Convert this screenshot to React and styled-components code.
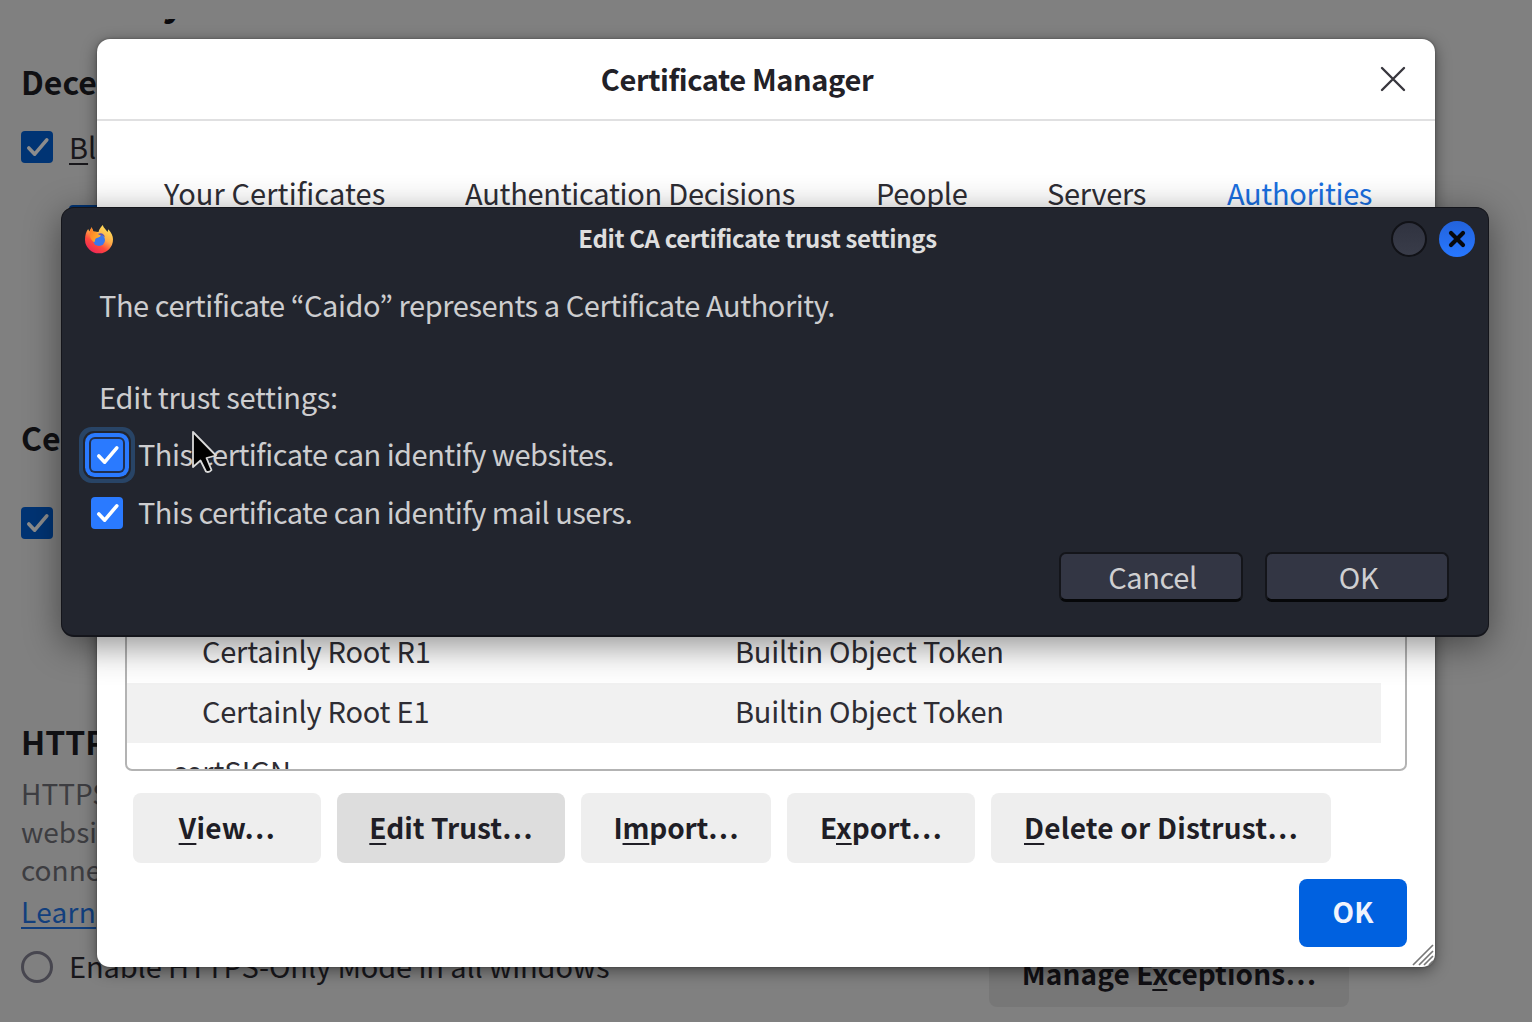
import React from "react";
import styled, { createGlobalStyle } from "styled-components";

const Global = createGlobalStyle`
  * { box-sizing: border-box; }
  html, body { margin: 0; padding: 0; }
  body {
    width: 1532px;
    height: 1022px;
    overflow: hidden;
    background: #808080;
    font-family: "Noto Sans CJK KR", "Noto Sans", sans-serif;
    font-size: 29px;
  }
`;

const Screen = styled.div`
  position: relative;
  width: 1532px;
  height: 1022px;
  overflow: hidden;
`;

const Page = styled.main`
  display: flex;
  flex-direction: column;
  height: 1003px;
  margin-top: 19px;
  padding-left: 21px;
  overflow: hidden;
  color: #0b0a0d;
`;

const PageTitle = styled.h1`
  flex: none;
  margin: -52px 0 0;
  height: 60px;
  font-size: 40px;
  line-height: 60px;
  font-weight: 700;
`;

const PageLine = styled.div`
  display: flex;
  flex: none;
  align-items: center;
  height: 40px;
  margin-top: ${(p) => p.$gap || 0}px;
  padding-left: ${(p) => p.$indent || 0}px;
  gap: 16px;
  white-space: nowrap;
  line-height: 40px;
  font-weight: ${(p) => (p.$bold ? 700 : 400)};
  font-size: ${(p) => p.$size || (p.$bold ? 32 : 29)}px;
  color: ${(p) => p.$color || (p.$bold ? "#101013" : "#18171b")};
`;

const Label = styled.span`
  margin-top: ${(p) => (p.$lift ? -2 * p.$lift : -4)}px;
  letter-spacing: ${(p) => p.$track || 0}px;
`;

const Link = styled.span`
  text-decoration: underline;
  text-decoration-thickness: 2px;
  text-underline-offset: 4px;
  letter-spacing: 0.3px;
`;

const Key = styled.span`
  text-decoration: underline;
  text-decoration-thickness: 2px;
  text-underline-offset: 4px;
  text-decoration-skip-ink: none;
`;

const Box = styled.span`
  display: flex;
  flex: none;
  width: 32px;
  height: 32px;
  border-radius: 4px;
  background: ${(p) => (p.$dim ? "#003474" : "#2a7aff")};
  color: ${(p) => (p.$dim ? "#8c8c8c" : "#ffffff")};
  box-shadow: ${(p) =>
    p.$focus
      ? "0 0 0 2px #21304f, 0 0 0 6px #2a7aff, 0 0 0 8px #22252e, 0 0 0 12px #284466"
      : "none"};
`;

const Radio = styled.span`
  width: 32px;
  height: 32px;
  border: 3px solid #47464f;
  border-radius: 50%;
`;

const PageFooter = styled.div`
  display: flex;
  flex: none;
  justify-content: flex-end;
  padding-right: 183px;
  margin-top: -50px;
`;

const Manage = styled.div`
  width: 360px;
  height: 70px;
  border-radius: 8px;
  background: #777777;
  color: #111014;
  font-size: 28px;
  font-weight: 700;
  line-height: 72px;
  text-align: center;
  letter-spacing: 0.1px;
`;

const Manager = styled.section`
  position: absolute;
  left: 97px;
  top: 39px;
  width: 1338px;
  height: 928px;
  border-radius: 13px;
  background: #ffffff;
  color: #2e2d34;
  box-shadow: 0 4px 16px rgba(0, 0, 0, 0.45), 0 0 3px rgba(0, 0, 0, 0.35);
  display: flex;
  flex-direction: column;
`;

const ManagerHeader = styled.header`
  display: flex;
  flex: none;
  align-items: center;
  height: 82px;
  padding-right: 29px;
  border-bottom: 2px solid #e0e0e1;
`;

const ManagerTitle = styled.h2`
  flex: 1;
  margin: -2px 0 0;
  padding-right: 3px;
  font-size: 29px;
  line-height: 40px;
  font-weight: 700;
  letter-spacing: -0.38px;
  text-align: center;
  color: #222127;
`;

const Tabs = styled.nav`
  display: flex;
  flex: none;
  gap: 80px;
  height: 60px;
  margin-top: 41px;
  padding-left: 67px;
  line-height: 60px;
  white-space: nowrap;
`;

const Tab = styled.span`
  flex: none;
  width: ${(p) => p.$w}px;
  letter-spacing: ${(p) => p.$track}px;
  color: ${(p) => (p.$active ? "#1a6fe0" : "#2e2d34")};
`;

const Tree = styled.div`
  flex: none;
  width: 1282px;
  height: 551px;
  margin: -2px 0 0 28px;
  padding-top: 401px;
  border: 2px solid #b3b3b3;
  border-radius: 7px;
  overflow: hidden;
`;

const Row = styled.div`
  display: grid;
  grid-template-columns: 533px 1fr;
  width: 1254px;
  height: 60px;
  padding-left: ${(p) => (p.$group ? 45 : 75)}px;
  line-height: 54px;
  white-space: nowrap;
  letter-spacing: ${(p) => (p.$group ? 0 : -0.23)}px;
  background: ${(p) => (p.$striped ? "#f1f1f1" : "transparent")};
`;

const Actions = styled.div`
  display: flex;
  flex: none;
  gap: 16px;
  margin: 22px 0 0 36px;
`;

const Action = styled.button`
  width: ${(p) => p.$w}px;
  height: 70px;
  padding: 0 0 2px;
  border: 0;
  border-radius: 8px;
  background: ${(p) => (p.$pressed ? "#dddddd" : "#eeeeee")};
  color: #1f1e26;
  font: 700 28px/68px "Noto Sans CJK KR", "Noto Sans", sans-serif;
  letter-spacing: ${(p) => p.$track || 0}px;
  white-space: nowrap;
`;

const Accept = styled.button`
  align-self: flex-end;
  flex: none;
  width: 108px;
  height: 68px;
  margin: 16px 28px 0 0;
  padding: 0 0 4px;
  border: 0;
  border-radius: 8px;
  background: #0061e0;
  color: #f0f4fd;
  font: 700 28px/64px "Noto Sans CJK KR", "Noto Sans", sans-serif;
`;

const Grip = styled.svg`
  position: absolute;
  right: 1px;
  bottom: 1px;
`;

const Trust = styled.section`
  position: absolute;
  left: 61px;
  top: 207px;
  display: flex;
  flex-direction: column;
  width: 1428px;
  height: 430px;
  border: 1px solid #14151b;
  border-bottom-width: 2px;
  border-radius: 13px;
  background: #22252e;
  color: #cdcdcf;
  box-shadow: 0 8px 36px rgba(0, 0, 0, 0.46);
`;

const TrustHeader = styled.header`
  display: grid;
  grid-template-columns: 41px 1fr 84px;
  align-items: center;
  flex: none;
  height: 62px;
  padding: 0 13px 0 21px;
`;

const TrustTitle = styled.h2`
  margin: -2px 0 0;
  font-size: 24px;
  line-height: 40px;
  font-weight: 700;
  letter-spacing: -0.38px;
  text-align: center;
  color: #dedede;
`;

const Controls = styled.div`
  display: flex;
  gap: 12px;
`;

const Round = styled.span`
  display: flex;
  flex: none;
  align-items: center;
  justify-content: center;
  width: 36px;
  height: 36px;
  border-radius: 50%;
  border: ${(p) => (p.$close ? "0" : "2px solid #111217")};
  background: ${(p) =>
    p.$close ? "linear-gradient(#2363dc, #2777ff)" : "linear-gradient(#303340, #393c49)"};
`;

const TrustBody = styled.div`
  display: flex;
  flex-direction: column;
  padding: 14px 39px 0 29px;
`;

const Copy = styled.p`
  margin: 0 0 ${(p) => p.$after || 0}px 8px;
  line-height: 40px;
  white-space: nowrap;
  letter-spacing: ${(p) => p.$track}px;
`;

const Option = styled.label`
  display: flex;
  align-items: center;
  gap: 15px;
  height: 40px;
  margin-bottom: 18px;
  line-height: 40px;
  white-space: nowrap;
`;

const DialogButtons = styled.div`
  display: flex;
  justify-content: flex-end;
  gap: 22px;
  margin-top: 1px;
`;

const DialogButton = styled.button`
  width: 184px;
  height: 50px;
  padding: 0 0 1px 3px;
  border: 2px solid #14151a;
  border-bottom: 3px solid #060709;
  border-radius: 7px;
  background: #333644;
  color: #cfcfd1;
  font: 400 29px/43px "Noto Sans CJK KR", "Noto Sans", sans-serif;
  letter-spacing: -0.4px;
`;

const Pointer = styled.svg`
  position: absolute;
  left: 191px;
  top: 430px;
`;

const Tick = () => (
  <svg width="32" height="32" viewBox="0 0 32 32" fill="none" stroke="currentColor" strokeWidth="3.6" strokeLinecap="round" strokeLinejoin="round">
    <path d="M7.8 17 13.7 23.2 25.8 8.8" />
  </svg>
);

const Firefox = () => (
  <svg width="32" height="32" viewBox="0 0 32 32">
    <defs>
      <linearGradient id="flame" x1="0.85" y1="0.1" x2="0.3" y2="1">
        <stop offset="0" stopColor="#ffe05a" />
        <stop offset="0.4" stopColor="#ffad48" />
        <stop offset="0.68" stopColor="#ff4a3c" />
        <stop offset="1" stopColor="#ee2458" />
      </linearGradient>
      <linearGradient id="mane" x1="0" y1="0" x2="1" y2="0.5">
        <stop offset="0" stopColor="#ff7827" />
        <stop offset="1" stopColor="#ffb12b" />
      </linearGradient>
    </defs>
    <path fill="url(#flame)" d="M19.8 2c.5 3 3.2 4.3 4.7 7l.8-2.7c3 3.3 4.7 6.5 4.7 10A14 13.8 0 0 1 2 16.8C2 12 3.2 8.6 5.2 6l1.1 2.6L8.6 4.3 10.5 8.5 15.5 9C16 6 18 4 19.8 2Z" />
    <circle cx="16" cy="17" r="6" fill="#3b78ed" />
    <path fill="#5a55b9" d="M15 10.8c3.5-1.8 6.5.3 7 3.5-2-2-3.8-2.3-5.5-1Z" />
    <path fill="url(#mane)" d="M8.6 4.3 10.5 9c3-.8 4.5.6 5 2.5l2.3.7c-.5 2.4-4.3 2.2-5.3 3.6-1 1.5.2 2.6-1.5 3.5C7 16 5 11 8.6 4.3Z" />
  </svg>
);

const rows = [
  { name: "Certainly Root R1", device: "Builtin Object Token" },
  { name: "Certainly Root E1", device: "Builtin Object Token", striped: true },
  { name: "certSIGN", group: true },
];

export default function App() {
  return (
    <Screen>
      <Global />
      <Page>
        <PageTitle>Security</PageTitle>
        <PageLine $bold $gap={35}><Label $lift={1}>Dece</Label></PageLine>
        <PageLine $gap={25}>
          <Box $dim><Tick /></Box>
          <Label $lift={1}><Key>B</Key>l</Label>
        </PageLine>
        <PageLine $gap={34} $indent={48}><Box $dim /></PageLine>
        <PageLine $bold $gap={178}><Label>Cer</Label></PageLine>
        <PageLine $gap={44}><Box $dim><Tick /></Box></PageLine>
        <PageLine $bold $gap={180}><Label>HTTPS</Label></PageLine>
        <PageLine $gap={11} $size={28} $color="#3d3d41"><Label $lift={1}>HTTPS</Label></PageLine>
        <PageLine $gap={-2} $size={28} $color="#3d3d41"><Label $lift={1}>websit</Label></PageLine>
        <PageLine $gap={-2} $size={28} $color="#3d3d41"><Label $lift={1}>connec</Label></PageLine>
        <PageLine $gap={3} $size={28} $color="#123f7d"><Label><Link>Learn</Link></Label></PageLine>
        <PageLine $gap={14}>
          <Radio />
          <Label $track={-0.12}>Enable HTTPS-Only Mode in all windows</Label>
        </PageLine>
        <PageFooter>
          <Manage>Manage E<Key>x</Key>ceptions…</Manage>
        </PageFooter>
      </Page>

      <Manager>
        <ManagerHeader>
          <ManagerTitle>Certificate Manager</ManagerTitle>
          <svg width="26" height="26" viewBox="0 0 26 26" stroke="#38373e" strokeWidth="2.4" strokeLinecap="round">
            <path d="M2 2 24 24M24 2 2 24" />
          </svg>
        </ManagerHeader>
        <Tabs>
          <Tab $w={221} $track={0.1}>Your Certificates</Tab>
          <Tab $w={331} $track={-0.27}>Authentication Decisions</Tab>
          <Tab $w={91} $track={-0.35}>People</Tab>
          <Tab $w={100} $track={-0.3}>Servers</Tab>
          <Tab $w={146} $track={-0.35} $active>Authorities</Tab>
        </Tabs>
        <Tree>
          {rows.map((r) => (
            <Row key={r.name} $striped={r.striped} $group={r.group}>
              <span>{r.name}</span>
              <span>{r.device}</span>
            </Row>
          ))}
        </Tree>
        <Actions>
          <Action $w={188} $track={0.4}><Key>V</Key>iew…</Action>
          <Action $w={228} $pressed><Key>E</Key>dit Trust…</Action>
          <Action $w={190} $track={-0.2}>I<Key>m</Key>port…</Action>
          <Action $w={188}>E<Key>x</Key>port…</Action>
          <Action $w={340} $track={0.2}><Key>D</Key>elete or Distrust…</Action>
        </Actions>
        <Accept>OK</Accept>
        <Grip width="22" height="22" viewBox="0 0 22 22" stroke="#777" strokeWidth="1.7">
          <path d="M1 21 21 1M7 21 21 7M12 21 21 12M17 21 21 17" />
        </Grip>
      </Manager>

      <Trust>
        <TrustHeader>
          <Firefox />
          <TrustTitle>Edit CA certificate trust settings</TrustTitle>
          <Controls>
            <Round />
            <Round $close>
              <svg width="18" height="18" viewBox="0 0 18 18" stroke="#07080c" strokeWidth="4.2" strokeLinecap="round">
                <path d="M3 3 15 15M15 3 3 15" />
              </svg>
            </Round>
          </Controls>
        </TrustHeader>
        <TrustBody>
          <Copy $after={52} $track={-0.44}>The certificate “Caido” represents a Certificate Authority.</Copy>
          <Copy $after={19} $track={-0.28}>Edit trust settings:</Copy>
          <Option>
            <Box $focus><Tick /></Box>
            <Label $track={-0.5}>This certificate can identify websites.</Label>
          </Option>
          <Option>
            <Box><Tick /></Box>
            <Label $track={-0.5}>This certificate can identify mail users.</Label>
          </Option>
          <DialogButtons>
            <DialogButton>Cancel</DialogButton>
            <DialogButton>OK</DialogButton>
          </DialogButtons>
        </TrustBody>
      </Trust>
      <Pointer width="27" height="45" viewBox="0 0 27 45">
        <path d="M2 2V37L9.5 30.5 15 41.5Q18 43 20.5 40L15.5 28 25 25.5Z" fill="#000" stroke="#d9d9d9" strokeWidth="1.8" strokeLinejoin="round" />
      </Pointer>
    </Screen>
  );
}
